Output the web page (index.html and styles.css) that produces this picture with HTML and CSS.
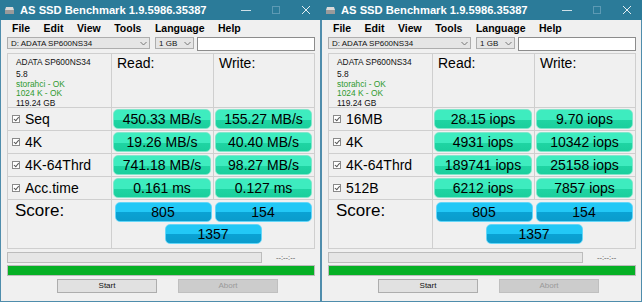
FILE: index.html
```html
<!DOCTYPE html>
<html lang="en">
  <head>
    <meta charset="UTF-8" />
    <title>AS SSD Benchmark</title>
    <link rel="stylesheet" href="styles.css">
  </head>
  <body>
    <div class="desk">
      <div class="win">
        <div class="titlebar">
          <svg class="appicon" width="9" height="9" viewBox="0 0 9 9">
            <path d="M1 1h7l1 3H0z" fill="#d9d9d9" />
            <rect x="0" y="4" width="9" height="4" fill="#9a9a9a" />
          </svg>
          <span class="title">AS SSD Benchmark 1.9.5986.35387</span>
          <div class="controls">
            <span class="ctl"><svg width="10" height="10" viewBox="0 0 10 10"><path d="M0 5.5h10" stroke="#cfe0e8" /></svg></span>
            <span class="ctl"><svg width="10" height="10" viewBox="0 0 10 10"><rect x="1.5" y="1.5" width="7" height="7" fill="none" stroke="#5d9ab4" /></svg></span>
            <span class="ctl"><svg width="10" height="10" viewBox="0 0 10 10"><path d="M1 1l8 8M9 1l-8 8" stroke="#e4eef2" /></svg></span>
          </div>
        </div>
        <div class="body">
          <div class="menu">
            <span>File</span><span>Edit</span><span>View</span><span>Tools</span><span>Language</span><span>Help</span>
          </div>
          <div class="tools">
            <div class="combo drive">D: ADATA SP600NS34<svg width="7" height="5" viewBox="0 0 7 5"><path d="M0.5 1l3 3 3-3" fill="none" stroke="#777" /></svg></div>
            <div class="combo size">1 GB<svg width="7" height="5" viewBox="0 0 7 5"><path d="M0.5 1l3 3 3-3" fill="none" stroke="#777" /></svg></div>
            <div class="textbox"></div>
          </div>
          <div class="grid">
            <div class="info">
              <div class="model">ADATA SP600NS34</div>
              <div>5.8</div>
              <div class="ok">storahci - OK</div>
              <div class="ok">1024 K - OK</div>
              <div>119.24 GB</div>
            </div>
            <div class="head">Read:</div>
            <div class="head">Write:</div>

            <div class="label"><span class="check"></span>Seq</div>
            <div class="cell"><div class="val">450.33 MB/s</div></div>
            <div class="cell"><div class="val">155.27 MB/s</div></div>

            <div class="label"><span class="check"></span>4K</div>
            <div class="cell"><div class="val">19.26 MB/s</div></div>
            <div class="cell"><div class="val">40.40 MB/s</div></div>

            <div class="label"><span class="check"></span>4K-64Thrd</div>
            <div class="cell"><div class="val">741.18 MB/s</div></div>
            <div class="cell"><div class="val">98.27 MB/s</div></div>

            <div class="label"><span class="check"></span>Acc.time</div>
            <div class="cell"><div class="val">0.161 ms</div></div>
            <div class="cell"><div class="val">0.127 ms</div></div>

            <div class="score-label">Score:</div>
            <div class="scores">
              <div class="sc">805</div>
              <div class="sc">154</div>
              <div class="sc">1357</div>
            </div>
          </div>
          <div class="status">
            <div class="bar"></div>
            <span class="time">--:--:--</span>
          </div>
          <div class="done"></div>
          <div class="buttons">
            <div class="btn">Start</div>
            <div class="btn off">Abort</div>
          </div>
        </div>
      </div>

      <div class="win">
        <div class="titlebar">
          <svg class="appicon" width="9" height="9" viewBox="0 0 9 9">
            <path d="M1 1h7l1 3H0z" fill="#d9d9d9" />
            <rect x="0" y="4" width="9" height="4" fill="#9a9a9a" />
          </svg>
          <span class="title">AS SSD Benchmark 1.9.5986.35387</span>
          <div class="controls">
            <span class="ctl"><svg width="10" height="10" viewBox="0 0 10 10"><path d="M0 5.5h10" stroke="#cfe0e8" /></svg></span>
            <span class="ctl"><svg width="10" height="10" viewBox="0 0 10 10"><rect x="1.5" y="1.5" width="7" height="7" fill="none" stroke="#5d9ab4" /></svg></span>
            <span class="ctl"><svg width="10" height="10" viewBox="0 0 10 10"><path d="M1 1l8 8M9 1l-8 8" stroke="#e4eef2" /></svg></span>
          </div>
        </div>
        <div class="body">
          <div class="menu">
            <span>File</span><span>Edit</span><span>View</span><span>Tools</span><span>Language</span><span>Help</span>
          </div>
          <div class="tools">
            <div class="combo drive">D: ADATA SP600NS34<svg width="7" height="5" viewBox="0 0 7 5"><path d="M0.5 1l3 3 3-3" fill="none" stroke="#777" /></svg></div>
            <div class="combo size">1 GB<svg width="7" height="5" viewBox="0 0 7 5"><path d="M0.5 1l3 3 3-3" fill="none" stroke="#777" /></svg></div>
            <div class="textbox"></div>
          </div>
          <div class="grid">
            <div class="info">
              <div class="model">ADATA SP600NS34</div>
              <div>5.8</div>
              <div class="ok">storahci - OK</div>
              <div class="ok">1024 K - OK</div>
              <div>119.24 GB</div>
            </div>
            <div class="head">Read:</div>
            <div class="head">Write:</div>

            <div class="label"><span class="check"></span>16MB</div>
            <div class="cell"><div class="val">28.15 iops</div></div>
            <div class="cell"><div class="val">9.70 iops</div></div>

            <div class="label"><span class="check"></span>4K</div>
            <div class="cell"><div class="val">4931 iops</div></div>
            <div class="cell"><div class="val">10342 iops</div></div>

            <div class="label"><span class="check"></span>4K-64Thrd</div>
            <div class="cell"><div class="val">189741 iops</div></div>
            <div class="cell"><div class="val">25158 iops</div></div>

            <div class="label"><span class="check"></span>512B</div>
            <div class="cell"><div class="val">6212 iops</div></div>
            <div class="cell"><div class="val">7857 iops</div></div>

            <div class="score-label">Score:</div>
            <div class="scores">
              <div class="sc">805</div>
              <div class="sc">154</div>
              <div class="sc">1357</div>
            </div>
          </div>
          <div class="status">
            <div class="bar"></div>
            <span class="time">--:--:--</span>
          </div>
          <div class="done"></div>
          <div class="buttons">
            <div class="btn">Start</div>
            <div class="btn off">Abort</div>
          </div>
        </div>
      </div>
    </div>
  </body>
</html>
```

FILE: styles.css
```css
body {
  margin: 0;
  background: #fff;
  font-family: "Liberation Sans", Arial, sans-serif;
}
.desk {
  display: flex;
  width: 642px;
  height: 302px;
}
.win {
  width: 321px;
  height: 302px;
  box-sizing: border-box;
  border: 1px solid #4f8dac;
  border-top: 0;
  background: #f0f0f0;
  display: flex;
  flex-direction: column;
}
.titlebar {
  height: 20px;
  margin: 0 -1px;
  background: #2b7b99;
  display: flex;
  align-items: center;
  color: #fff;
}
.appicon {
  margin-left: 5px;
}
.title {
  margin-left: 6px;
  font-size: 11.2px;
  font-weight: bold;
}
.controls {
  margin-left: auto;
  display: flex;
}
.ctl {
  width: 30px;
  height: 20px;
  display: flex;
  align-items: center;
  justify-content: center;
}
.body {
  padding: 0 5px 0 6px;
  display: flex;
  flex-direction: column;
}
.menu {
  height: 16px;
  display: flex;
  align-items: center;
  gap: 13.5px;
  padding-left: 5px;
  font-size: 10.5px;
  font-weight: bold;
  color: #000;
}
.tools {
  display: flex;
  align-items: flex-start;
  height: 14px;
  margin-top: 1px;
}
.combo {
  height: 12px;
  box-sizing: border-box;
  border: 1px solid #adadad;
  background: #e5e5e5;
  font-size: 8px;
  padding: 0 2px 0 3px;
  display: flex;
  align-items: center;
  justify-content: space-between;
  color: #111;
}
.drive {
  width: 143px;
}
.size {
  width: 39px;
  margin-left: 5px;
}
.textbox {
  flex: 1;
  height: 14px;
  margin-left: 3px;
  box-sizing: border-box;
  border: 1px solid #8c8c8c;
  background: #fff;
}
.grid {
  margin-top: 2px;
  width: 308px;
  box-sizing: border-box;
  display: grid;
  grid-template-columns: 103px 101px 100px;
  grid-template-rows: 53px 22px 22px 22px 22px 48px;
  gap: 1px;
  padding: 1px;
  background: #cfcfcf;
}
.grid > div {
  background: #f0f0f0;
}
.info {
  padding: 4px 0 0 8px;
  font-size: 8.4px;
  line-height: 9.8px;
  color: #111;
}
.model {
  margin-bottom: 2px;
}
.ok {
  color: #2f9a2f;
}
.head {
  padding: 1px 0 0 5px;
  font-size: 14px;
  line-height: 16px;
}
.label {
  display: flex;
  align-items: center;
  padding-left: 4px;
  font-size: 14px;
}
.check {
  width: 8px;
  height: 8px;
  border: 1px solid #8a8a8a;
  background: #fff;
  margin-right: 5px;
  position: relative;
  box-sizing: border-box;
}
.check::after {
  content: "";
  position: absolute;
  left: 1.5px;
  top: 0;
  width: 2px;
  height: 3.5px;
  border: solid #555;
  border-width: 0 1px 1px 0;
  transform: rotate(40deg);
}
.cell {
  padding: 1px 2px 1px 1px;
}
.val,
.sc {
  height: 20px;
  box-sizing: border-box;
  border-radius: 5px;
  font-size: 14px;
  line-height: 19px;
  text-align: center;
  color: #000;
}
.val {
  border: 1px solid #7fe7cb;
  background: linear-gradient(#3eecbf 0, #3eecbf 55%, #1fd5a3 55%, #1bcf9d 100%);
}
.score-label {
  padding: 1px 0 0 7px;
  font-size: 17px;
  line-height: 20px;
}
.grid > .scores {
  grid-column: span 2;
  display: flex;
  flex-wrap: wrap;
  justify-content: center;
  align-content: flex-start;
  gap: 2px 3px;
  padding: 2px 2px 0 2px;
}
.sc {
  width: 97px;
  border: 1px solid #63d6f8;
  background: linear-gradient(#22c8f6 0, #22c8f6 50%, #0aa2d4 50%, #0a9ccc 100%);
}
.status {
  margin-top: 3px;
  display: flex;
  align-items: center;
}
.bar {
  width: 255px;
  height: 11px;
  box-sizing: border-box;
  border: 1px solid #bcbcbc;
  background: #e6e6e6;
}
.time {
  margin-left: 14px;
  font-size: 7.5px;
  color: #555;
}
.done {
  margin-top: 2px;
  width: 308px;
  height: 11px;
  box-sizing: border-box;
  border: 1px solid #bcbcbc;
  background: #06b025;
}
.buttons {
  margin-top: 3px;
  display: flex;
  gap: 21px;
  padding-left: 50px;
}
.btn {
  width: 100px;
  height: 14px;
  box-sizing: border-box;
  border: 1px solid #adadad;
  background: #e1e1e1;
  font-size: 8px;
  line-height: 12px;
  text-align: center;
  color: #111;
}
.btn.off {
  background: #cccccc;
  border-color: #bfbfbf;
  color: #9a9a9a;
}
```
